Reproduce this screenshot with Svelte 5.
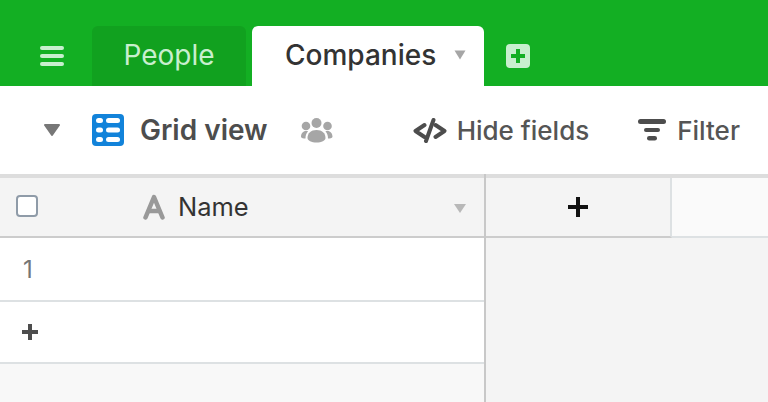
<script>
    const rows = [1];
</script>

<div class="page">
    <header class="tabbar">
        <button class="menu" aria-label="Menu">
            <svg width="24" height="20" viewBox="0 0 24 20"><rect y="0" width="24" height="4" rx="2" /><rect y="8" width="24" height="4" rx="2" /><rect y="16" width="24" height="4" rx="2" /></svg>
        </button>
        <div class="tab inactive">People</div>
        <div class="tab active">
            <span>Companies</span>
            <svg class="caret" width="12" height="10" viewBox="0 0 12 10"><path d="M0.5 0.5h11L6 9.500z" /></svg>
        </div>
        <button class="add-table" aria-label="Add table">
            <svg width="24" height="24" viewBox="0 0 24 24"><rect width="24" height="24" rx="4" fill="#c8efce" /><path d="M10 5h4v5h5v4h-5v5h-4v-5H5v-4h5z" fill="#13af23" /></svg>
        </button>
    </header>

    <div class="toolbar">
        <svg class="view-caret" width="16" height="12" viewBox="0 0 16 12"><path d="M1 0h14a1 1 0 0 1 .8 1.600L8.800 11.500a1 1 0 0 1-1.600 0L.2 1.600A1 1 0 0 1 1 0z" /></svg>
        <svg class="grid-icon" width="32" height="32" viewBox="0 0 32 32">
            <rect width="32" height="32" rx="4" fill="#1283da" />
            <g fill="#fff">
                <rect x="4" y="4" width="7" height="5" rx="2.500" /><rect x="14" y="4" width="14" height="5" rx="2.500" />
                <rect x="4" y="13.500" width="7" height="5" rx="2.500" /><rect x="14" y="13.500" width="14" height="5" rx="2.500" />
                <rect x="4" y="23" width="7" height="5" rx="2.500" /><rect x="14" y="23" width="14" height="5" rx="2.500" />
            </g>
        </svg>
        <span class="view-name">Grid view</span>
        <svg class="people-icon" width="32" height="26" viewBox="0 0 32 26" fill="#a6a6a6">
            <circle cx="15.500" cy="6" r="5" /><circle cx="5" cy="9" r="4.300" /><circle cx="26.500" cy="9" r="4.300" />
            <path d="M6.500 21c0-5 3.500-8 9-8s9 3 9 8c0 2.500-4 4.500-9 4.500s-9-2-9-4.500z" />
            <path d="M0 20c0-3.500 2-6 5-6 .8 0 1.500.1 2.100.4C5.300 16 4.500 18.200 4.500 21.500 2.400 21.500.6 21 0 20z" />
            <path d="M31.500 20c0-3.500-2-6-5-6-.8 0-1.500.1-2.100.4 1.800 1.600 2.600 3.800 2.600 7.100 2.100 0 3.900-.5 4.500-1.500z" />
        </svg>

        <div class="action hide">
            <svg width="34" height="26" viewBox="0 0 34 26" fill="none" stroke="#4d4d4d" stroke-width="4" stroke-linecap="round" stroke-linejoin="round">
                <path d="M11.500 8L2.500 14l9 6" /><path d="M22.500 8l9 6-9 6" /><path d="M20.500 3L13 24" />
            </svg>
            <span>Hide fields</span>
        </div>
        <div class="action filter">
            <svg width="28" height="22" viewBox="0 0 28 22" fill="#4d4d4d">
                <rect width="28" height="5" rx="2.500" /><rect x="6" y="9" width="16" height="4" rx="2" /><rect x="9" y="17" width="10" height="4.500" rx="2.200" />
            </svg>
            <span>Filter</span>
        </div>
    </div>

    <div class="grid">
        <div class="left">
            <div class="head-row">
                <span class="checkbox"></span>
                <svg class="type-icon" width="22" height="26" viewBox="0 0 22 26" fill="none" stroke="#999" stroke-width="4.500" stroke-linecap="round" stroke-linejoin="round">
                    <path d="M2.500 23.500L11 3l8.500 20.500" /><path d="M6 17h10" />
                </svg>
                <span class="field-name">Name</span>
                <svg class="field-caret" width="12" height="9" viewBox="0 0 12 9"><path d="M0 0h12L6 9z" /></svg>
            </div>
            {#each rows as row}
                <div class="row"><span class="row-num">{row}</span></div>
            {/each}
            <div class="row add-row">
                <svg width="16" height="16" viewBox="0 0 16 16"><path d="M6 0h4v6h6v4h-6v6H6v-6H0V6h6z" fill="#4d4d4d" /></svg>
            </div>
            <div class="foot"></div>
        </div>
        <div class="right">
            <div class="right-head">
                <div class="add-field">
                    <svg width="20" height="20" viewBox="0 0 20 20"><path d="M8 0h4v8h8v4h-8v8H8v-8H0V8h8z" fill="#111" /></svg>
                </div>
                <div class="head-rest"></div>
            </div>
        </div>
    </div>
</div>

<style>
    :global(body) {
        margin: 0;
    }

    .page {
        width: 768px;
        height: 402px;
        overflow: hidden;
        font-family: Inter, "Noto Sans", sans-serif;
        background: #f4f4f4;
        display: flex;
        flex-direction: column;
    }

    button {
        border: 0;
        padding: 0;
        background: none;
        display: flex;
    }

    .tabbar {
        height: 86px;
        box-sizing: border-box;
        padding-top: 26px;
        background: #13af23;
        display: flex;
        align-items: stretch;
    }

    .menu {
        width: 24px;
        margin: 20px 24px 0 40px;
        align-self: flex-start;
    }

    .menu svg {
        fill: #c8efce;
    }

    .tab {
        border-radius: 6px 6px 0 0;
        font-size: 28px;
        display: flex;
        align-items: center;
    }

    .inactive {
        width: 154px;
        justify-content: center;
        background: #11a11f;
        color: #c8efce;
        margin-left: 4px;
        padding-bottom: 2px;
        box-sizing: border-box;
    }

    .active {
        width: 232px;
        box-sizing: border-box;
        margin-left: 6px;
        padding: 0 0 2px 33px;
        background: #fff;
        color: #333;
        font-weight: 500;
    }

    .caret {
        fill: #a6a6a6;
        margin-left: 18px;
    }

    .add-table {
        margin: 18px 0 0 22px;
        align-self: flex-start;
    }

    .toolbar {
        height: 88px;
        background: #fff;
        display: flex;
        align-items: center;
        flex-shrink: 0;
    }

    .view-caret {
        fill: #777;
        margin-left: 44px;
    }

    .grid-icon {
        margin-left: 32px;
    }

    .view-name {
        margin-left: 16px;
        font-size: 28px;
        font-weight: 600;
        color: #4d4d4d;
    }

    .people-icon {
        margin-left: 33px;
    }

    .action {
        display: flex;
        align-items: center;
        font-size: 26px;
        font-weight: 500;
        color: #555;
    }

    .hide {
        margin-left: 80px;
        gap: 10px;
    }

    .filter {
        margin-left: 49px;
        gap: 11px;
    }

    .grid {
        flex: 1;
        display: flex;
        min-height: 0;
        position: relative;
        border-top: 4px solid #ddd;
    }

    .left {
        width: 486px;
        box-sizing: border-box;
        border-right: 2px solid #c8c8c8;
        margin-top: -4px;
        padding-top: 4px;
        display: flex;
        flex-direction: column;
    }

    .head-row {
        height: 60px;
        box-sizing: border-box;
        background: #f4f4f4;
        border-bottom: 2px solid #ccc;
        display: flex;
        align-items: center;
    }

    .checkbox {
        width: 18px;
        height: 18px;
        margin: 0 0 2px 16px;
        border: 2px solid #8f9ba8;
        border-radius: 4px;
        background: #fff;
    }

    .type-icon {
        margin-left: 105px;
        flex-shrink: 0;
    }

    .field-name {
        margin-left: 13px;
        margin-bottom: 1px;
        font-size: 25.500px;
        color: #333;
    }

    .field-caret {
        fill: #b8b8b8;
        margin-left: auto;
        margin-right: 18px;
        margin-top: 3px;
    }

    .row {
        height: 64px;
        box-sizing: border-box;
        background: #fff;
        border-bottom: 2px solid #dde1e3;
        display: flex;
        align-items: center;
    }

    .add-row {
        height: 62px;
        padding-left: 22px;
    }

    .row-num {
        margin-left: 23px;
        font-size: 24px;
        color: #757575;
    }

    .foot {
        flex: 1;
        background: #f8f8f8;
    }

    .right {
        flex: 1;
    }

    .right-head {
        height: 60px;
        display: flex;
        box-sizing: border-box;
    }

    .add-field {
        width: 186px;
        box-sizing: border-box;
        border-right: 2px solid #dde1e3;
        border-bottom: 2px solid #ccc;
        background: #f4f4f4;
        display: flex;
        align-items: center;
        justify-content: center;
    }

    .head-rest {
        flex: 1;
        background: #fafafa;
        border-bottom: 2px solid #dde1e3;
    }
</style>
